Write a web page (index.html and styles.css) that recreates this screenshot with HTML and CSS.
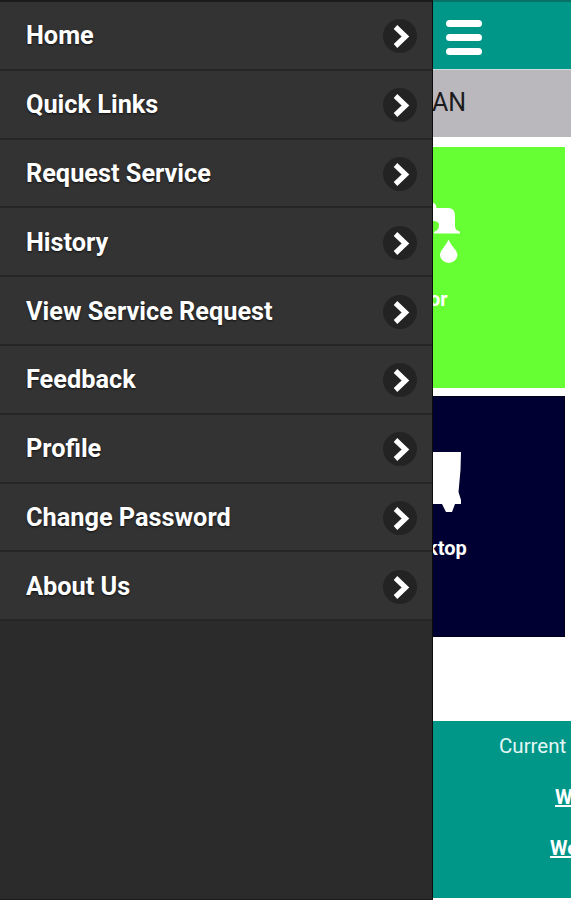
FILE: index.html
```
<!DOCTYPE html>
<html lang="en">

<head>
    <meta charset="UTF-8">
    <meta name="viewport" content="width=device-width, initial-scale=1.0">
    <title>Services</title>
    <link rel="stylesheet" href="styles.css">
</head>

<body>
    <div id="container">
        <nav id="menu">
            <ul>
                <li><a href="#">Home</a><span class="arrow"><svg viewBox="0 0 34 34"><path d="M12.5 8 L22.5 17.5 L12.5 27" /></svg></span></li>
                <li><a href="#">Quick Links</a><span class="arrow"><svg viewBox="0 0 34 34"><path d="M12.5 8 L22.5 17.5 L12.5 27" /></svg></span></li>
                <li><a href="#">Request Service</a><span class="arrow"><svg viewBox="0 0 34 34"><path d="M12.5 8 L22.5 17.5 L12.5 27" /></svg></span></li>
                <li><a href="#">History</a><span class="arrow"><svg viewBox="0 0 34 34"><path d="M12.5 8 L22.5 17.5 L12.5 27" /></svg></span></li>
                <li><a href="#">View Service Request</a><span class="arrow"><svg viewBox="0 0 34 34"><path d="M12.5 8 L22.5 17.5 L12.5 27" /></svg></span></li>
                <li><a href="#">Feedback</a><span class="arrow"><svg viewBox="0 0 34 34"><path d="M12.5 8 L22.5 17.5 L12.5 27" /></svg></span></li>
                <li><a href="#">Profile</a><span class="arrow"><svg viewBox="0 0 34 34"><path d="M12.5 8 L22.5 17.5 L12.5 27" /></svg></span></li>
                <li><a href="#">Change Password</a><span class="arrow"><svg viewBox="0 0 34 34"><path d="M12.5 8 L22.5 17.5 L12.5 27" /></svg></span></li>
                <li><a href="#">About Us</a><span class="arrow"><svg viewBox="0 0 34 34"><path d="M12.5 8 L22.5 17.5 L12.5 27" /></svg></span></li>
            </ul>
        </nav>

        <div id="page">
            <header>
                <div class="burger">
                    <span></span>
                    <span></span>
                    <span></span>
                </div>
            </header>
            <div class="username">AN</div>

            <div class="tiles">
                <div class="tile green">
                    <!-- tap with a drop -->
                    <svg width="28" height="64" viewBox="0 0 28 64">
                        <path d="M0 2 Q3 2 3.5 7 L16 7 Q22 8 22 14 L22 26 Q23 30 27 30.5 L27 32.5 L1 32.5 Q0.5 30.5 4 29.5 Q6 28 6 24 Q6 20 0 20 Z" />
                        <path d="M15.5 38.5 C18 45 24.5 49 24.5 54.5 A8.8 8.3 0 0 1 7 54.5 C7 49 13 45 15.5 38.5 Z" />
                    </svg>
                    <p class="label1">or</p>
                </div>
                <div class="tile navy">
                    <svg width="28" height="64" viewBox="0 0 28 64">
                        <path d="M0 1 H28 L27.5 19 L25.5 41 L28 49 V53 H22 L19 61 H13 L9 53 H0 Z" />
                    </svg>
                    <p class="label2">ktop</p>
                </div>
            </div>

            <footer>
                <div>Current</div>
                <a href="#" class="link1">We</a>
                <a href="#" class="link2">We</a>
            </footer>
        </div>
    </div>
</body>

</html>
```
FILE: styles.css
```
* {
    box-sizing: border-box;
}

body {
    margin: 0;
    font-family: Roboto, "Liberation Sans", sans-serif;
    overflow: hidden;
}

#container {
    display: flex;
    height: 900px;
    background-color: #fff;
}

/* side menu */
#menu {
    width: 433px;
    flex: none;
    background-color: #2b2b2b;
    border-top: 2px solid #1b1b1b;
    border-right: 1px solid #0c0c0c;
    border-bottom: 1px solid #1f191d;
}

#menu ul {
    list-style: none;
    margin: 0;
    padding: 0;
}

#menu li {
    display: flex;
    align-items: center;
    justify-content: space-between;
    height: 68.8px;
    padding: 0 15px 0 26px;
    background-color: #333;
    border-bottom: 2px solid #262626;
}

#menu a {
    margin-top: 2px;
    color: #fff;
    font-size: 25.3px;
    font-weight: bold;
    line-height: 30px;
    text-decoration: none;
    text-shadow: 0 1px 2px #111;
}

.arrow {
    width: 34px;
    height: 34px;
    margin-top: 2px;
    border-radius: 50%;
    background-color: #232323;
}

.arrow svg {
    display: block;
}

.arrow path {
    fill: none;
    stroke: #fff;
    stroke-width: 5.2;
}

/* page behind the menu */
#page {
    flex: 1;
    min-width: 0;
    overflow: hidden;
    display: flex;
    flex-direction: column;
}

header {
    height: 69px;
    flex: none;
    padding: 20px 0 0 13px;
    background-color: #009688;
    border-top: 2px solid #087065;
}

.burger {
    display: flex;
    flex-direction: column;
    gap: 7px;
    margin-top: -2px;
}

.burger span {
    width: 36px;
    height: 7px;
    border-radius: 4px;
    background-color: #fff;
}

.username {
    height: 68px;
    flex: none;
    background-color: #bab8bc;
    border-top: 1px solid #cde0df;
    color: #1c1b1c;
    font-size: 25px;
    line-height: 66px;
    text-indent: -1px;
}

.tiles {
    display: flex;
    flex-direction: column;
    gap: 8px;
    padding: 10px 6px 0 0;
}

.tile {
    height: 241px;
    padding-top: 54px;
    color: #fff;
}

.tile svg {
    display: block;
    fill: #fff;
}

.tile p {
    margin: 22px 0 0;
    font-size: 20px;
    font-weight: bold;
    line-height: 24px;
}

.tile .label1 {
    margin-left: -4px;
}

.tile .label2 {
    margin-top: 21px;
    margin-left: -6px;
}

.green {
    background-color: #66ff33;
}

.navy {
    background-color: #000033;
    border: 1px solid #000018;
    border-left: none;
}

footer {
    height: 177px;
    flex: none;
    margin-top: auto;
    margin-bottom: 2px;
    padding-top: 13px;
    background-color: #009688;
    color: #e4f7f5;
    font-size: 20px;
    line-height: 24px;
    white-space: nowrap;
}

footer div {
    padding-left: 66px;
    font-size: 20.5px;
}

footer a {
    display: block;
    color: #fff;
    font-weight: bold;
}

.link1 {
    margin: 27px 0 0 122px;
}

.link2 {
    margin: 27px 0 0 117px;
}
```
